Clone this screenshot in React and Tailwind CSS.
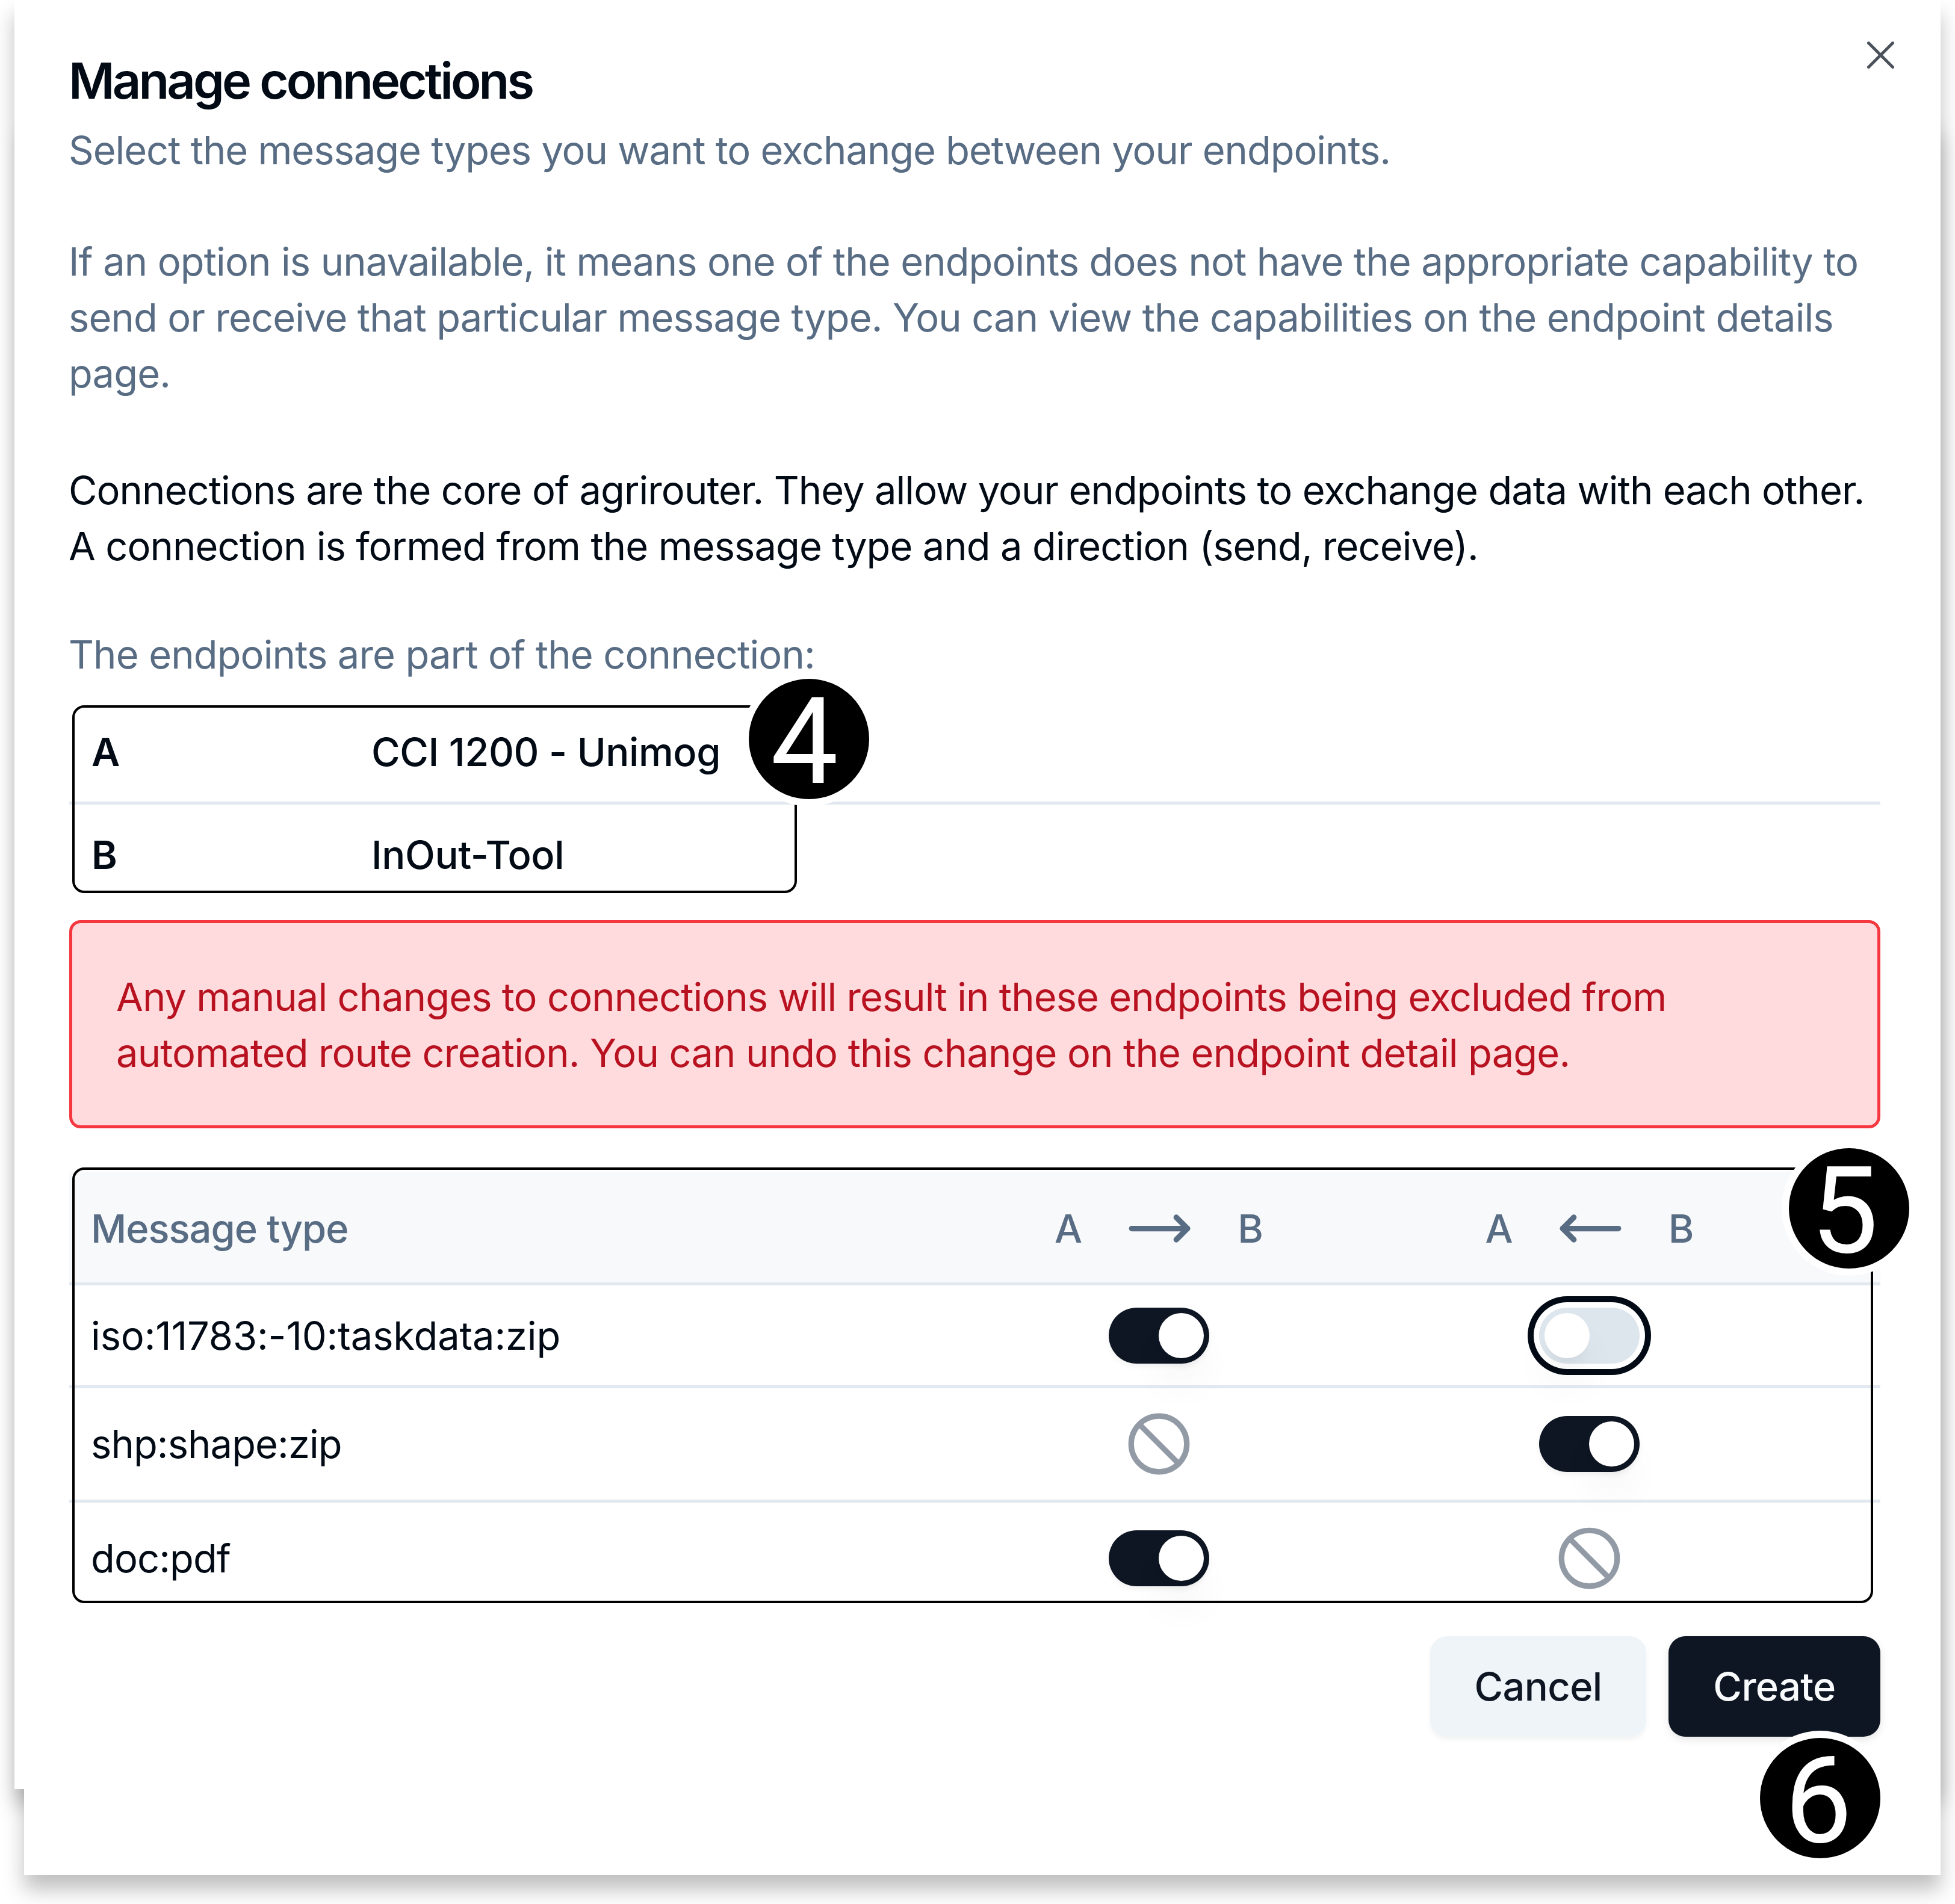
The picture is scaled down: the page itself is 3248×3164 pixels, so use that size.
import { Ban, MoveLeft, MoveRight } from "lucide-react";

function Marker({ n, className }) {
  return (
    <div
      className={
        "absolute z-10 flex size-[200px] items-center justify-center rounded-full bg-black pt-[9px] text-[200px] leading-none font-normal tracking-normal text-white shadow-[0_0_0_12px_#fff] [font-family:Roboto,sans-serif] " +
        className
      }
    >
      {n}
    </div>
  );
}

function Switch({ on, focused }) {
  return (
    <div
      className={
        "flex h-[93px] w-[167px] items-center rounded-full p-[9px] " +
        (on ? "justify-end bg-[#0f1623] " : "bg-[#dde5ed] ") +
        (focused ? "shadow-[0_0_0_9px_#fff,0_0_0_19px_#020b15]" : "shadow-[0_5px_9px_rgba(0,0,0,0.05)]")
      }
    >
      <div className="size-[75px] rounded-full bg-white shadow-[0_46px_70px_-14px_rgba(0,0,0,0.1),0_18px_28px_-18px_rgba(0,0,0,0.1)]" />
    </div>
  );
}

function Cell({ state }) {
  return (
    <div className="flex justify-center">
      {state === "none" ? (
        <Ban size={111} strokeWidth={2} className="text-[#929aa6]" />
      ) : (
        <Switch on={state === "on"} focused={state === "focus"} />
      )}
    </div>
  );
}

const rows = [
  { name: "iso:11783:-10:taskdata:zip", ab: "on", ba: "focus", style: "h-[171px] border-b-[5px] tracking-[-0.1px]" },
  { name: "shp:shape:zip", ab: "none", ba: "on", style: "h-[190px] border-b-[5px] tracking-[-0.9px]" },
  { name: "doc:pdf", ab: "on", ba: "none", style: "h-[185px] tracking-[-0.9px]" },
];

export default function App() {
  return (
    <div className="relative h-[3164px] w-[3248px] overflow-hidden bg-white text-[65px] leading-[93px] tracking-[-0.91px] text-[#020b15] [font-family:Inter,sans-serif]">
      <div className="absolute top-0 left-[24px] h-[2973px] w-[3200px] bg-white shadow-[0_24px_32px_rgba(0,0,0,0.25)]" />
      <div className="absolute top-[200px] left-[40px] h-[2916px] w-[3184px] bg-white shadow-[0_24px_32px_rgba(0,0,0,0.25)]" />
      <div className="absolute top-0 left-[24px] h-[2973px] w-[3200px] bg-white" />

      <svg className="absolute top-[69px] left-[3102px] size-[45px]" viewBox="0 0 45 45" fill="none" stroke="#4b525b" strokeWidth="5" strokeLinecap="round">
        <path d="M2.5 2.5 42.5 42.5M42.5 2.5 2.5 42.5" />
      </svg>

      <main className="relative mr-[124px] ml-[115px] flex flex-col pt-[92px]">
        <h1 className="-ml-px text-[83px] leading-[84px] font-semibold tracking-[-3.9px]">Manage connections</h1>
        <div className="mt-[27px] -mr-10 -ml-px tracking-[-0.88px] whitespace-nowrap text-[#586c84]">
          <p className="tracking-[-1.03px]">Select the message types you want to exchange between your endpoints.</p>
          <p className="mt-[92px]">
            If an option is unavailable, it means one of the endpoints does not have the appropriate capability to
            <br />
            send or receive that particular message type. You can view the capabilities on the endpoint details
            <br />
            page.
          </p>
        </div>
        <p className="mt-[101px] -mr-10 -ml-px tracking-[-0.92px] whitespace-nowrap">
          Connections are the core of agrirouter. They allow your endpoints to exchange data with each other.
          <br />A connection is formed from the message type and a direction (send, receive).
        </p>
        <p className="mt-[87px] -ml-px tracking-[-0.86px] text-[#586c84]">The endpoints are part of the connection:</p>

        <div className="relative mt-[33px] h-[362px] tracking-[-0.4px]">
          <div className="flex h-[170px] items-center border-b-[5px] border-[#e1e8ef] pl-[37px]">
            <b className="w-[465px] font-semibold">A</b>
            <span className="font-medium">CCI 1200 - Unimog</span>
          </div>
          <div className="flex h-[166px] items-center pl-[37px]">
            <b className="w-[465px] font-semibold">B</b>
            <span className="font-medium">InOut-Tool</span>
          </div>
          <div className="absolute top-[5px] left-[5px] h-[312px] w-[1204px] rounded-[20px] border-4 border-black" />
          <Marker n="4" className="-top-[39px] left-[1129px] pr-[15px]" />
        </div>

        <div className="h-[346px] rounded-[19px] border-[5px] border-[#f5383f] bg-[#ffdbdd] pt-[76px] pl-[73px] whitespace-nowrap text-[#b81220]">
          <p className="tracking-[-0.94px]">
            Any manual changes to connections will result in these endpoints being excluded from
          </p>
          <p className="tracking-[-0.85px]">
            automated route creation. You can undo this change on the endpoint detail page.
          </p>
        </div>

        <div className="relative mt-[72px]">
          <div className="grid h-[189px] grid-cols-[1416px_716px_715px] items-center border-b-[5px] border-[#e1e8ef] bg-[#f8f9fb] pt-1 pl-[36px] font-medium text-[#586c84]">
            <div className="tracking-[-1px]">Message type</div>
            <div className="flex items-center justify-center gap-[74px]">
              A <MoveRight size={111} /> B
            </div>
            <div className="flex items-center justify-center gap-[74px]">
              A <MoveLeft size={111} /> B
            </div>
          </div>
          {rows.map((r) => (
            <div
              key={r.name}
              className={"grid grid-cols-[1416px_716px_715px] items-center border-[#e1e8ef] pl-[36px] " + r.style}
            >
              <div>{r.name}</div>
              <Cell state={r.ab} />
              <Cell state={r.ba} />
            </div>
          ))}
          <div className="absolute -top-[7px] left-[5px] h-[724px] w-[2992px] rounded-[20px] border-4 border-black" />
          <Marker n="5" className="-top-[39px] left-[2857px] pr-[15px]" />
        </div>

        <div className="relative mt-[37px] flex justify-end gap-[37px] font-medium tracking-[-0.6px]">
          <button className="h-[167px] w-[359px] rounded-[28px] bg-[#eef4f8] text-[#0f1623] shadow-[0_5px_9px_rgba(0,0,0,0.05)]">Cancel</button>
          <button className="h-[167px] w-[352px] rounded-[28px] bg-[#0f1623] text-[#f8fafc] shadow-[0_5px_14px_rgba(0,0,0,0.1)]">Create</button>
          <Marker n="6" className="top-[169px] left-[2809px] pr-[6px]" />
        </div>
      </main>
    </div>
  );
}
